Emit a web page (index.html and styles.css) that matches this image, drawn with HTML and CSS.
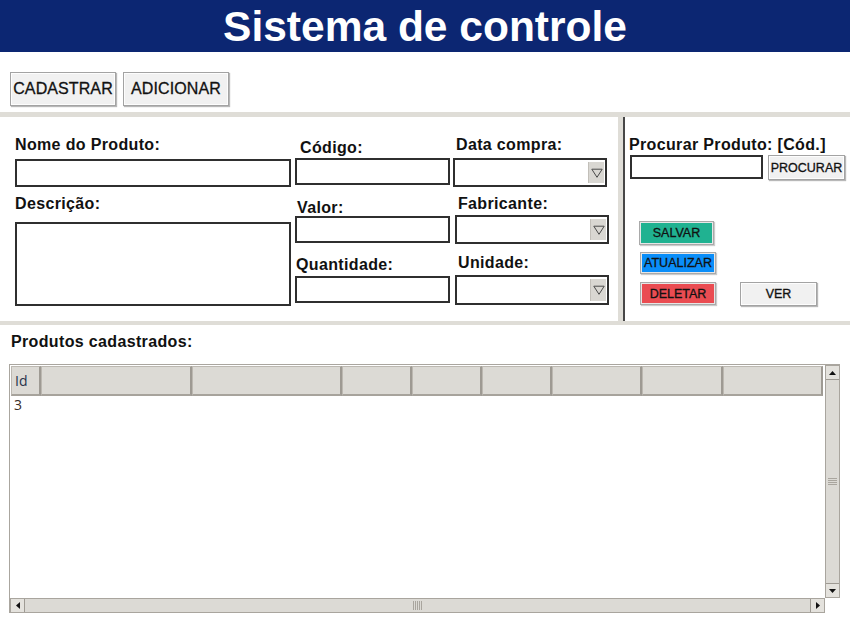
FILE: index.html
```html
<!DOCTYPE html>
<html lang="pt">
<head>
<meta charset="utf-8">
<title>Sistema de controle</title>
<link rel="stylesheet" href="styles.css">
</head>
<body>
<header class="title">Sistema de controle</header>

<nav class="toolbar">
  <button class="btn btn-top">CADASTRAR</button>
  <button class="btn btn-top">ADICIONAR</button>
</nav>

<div class="hsep"></div>

<section class="form-area">
  <div class="fields">
    <div class="col col-1">
      <label class="lbl lbl-nome">Nome do Produto:</label>
      <input class="field field-nome" type="text">
      <label class="lbl lbl-desc">Descrição:</label>
      <textarea class="field field-desc"></textarea>
    </div>
    <div class="col col-2">
      <label class="lbl lbl-codigo">Código:</label>
      <input class="field field-small field-codigo" type="text">
      <label class="lbl lbl-valor">Valor:</label>
      <input class="field field-small field-valor" type="text">
      <label class="lbl lbl-qtd">Quantidade:</label>
      <input class="field field-small field-qtd" type="text">
    </div>
    <div class="col col-3">
      <label class="lbl lbl-data">Data compra:</label>
      <div class="combo combo-data"><span class="combo-arrow"><svg width="12" height="10" viewBox="0 0 12 10"><path d="M0.8 1.2 H11.2 L6 9.3 Z" fill="none" stroke="#4a4a4a" stroke-width="1"/></svg></span></div>
      <label class="lbl lbl-fab">Fabricante:</label>
      <div class="combo combo-fab"><span class="combo-arrow"><svg width="12" height="10" viewBox="0 0 12 10"><path d="M0.8 1.2 H11.2 L6 9.3 Z" fill="none" stroke="#4a4a4a" stroke-width="1"/></svg></span></div>
      <label class="lbl lbl-uni">Unidade:</label>
      <div class="combo combo-uni"><span class="combo-arrow"><svg width="12" height="10" viewBox="0 0 12 10"><path d="M0.8 1.2 H11.2 L6 9.3 Z" fill="none" stroke="#4a4a4a" stroke-width="1"/></svg></span></div>
    </div>
  </div>
  <div class="vsep"></div>
  <div class="side">
    <label class="lbl lbl-busca">Procurar Produto: [Cód.]</label>
    <div class="search-row">
      <input class="field field-busca" type="text">
      <button class="btn btn-small btn-procurar">PROCURAR</button>
    </div>
    <div class="actions">
      <button class="btn btn-small btn-salvar">SALVAR</button>
      <button class="btn btn-small btn-atualizar">ATUALIZAR</button>
      <div class="action-row">
        <button class="btn btn-small btn-deletar">DELETAR</button>
        <button class="btn btn-small btn-ver">VER</button>
      </div>
    </div>
  </div>
</section>

<div class="hsep hsep-thin"></div>

<section class="products">
  <div class="products-label">Produtos cadastrados:</div>
  <div class="table">
    <div class="view">
      <div class="thead">
        <div class="th th-id">Id</div>
        <div class="th w151"></div>
        <div class="th w150"></div>
        <div class="th w70"></div>
        <div class="th w70"></div>
        <div class="th w70"></div>
        <div class="th w90"></div>
        <div class="th w81"></div>
        <div class="th w100"></div>
      </div>
      <div class="tr"><div class="td">3</div></div>
    </div>
    <div class="vscroll">
      <span class="sb-btn"><svg width="7" height="4" viewBox="0 0 7 4"><path d="M0 4 L3.5 0 L7 4 Z" fill="#111"/></svg></span>
      <span class="sb-thumb sb-thumb-v"><span class="grip-v"></span></span>
      <span class="sb-btn"><svg width="7" height="4" viewBox="0 0 7 4"><path d="M0 0 L7 0 L3.5 4 Z" fill="#111"/></svg></span>
    </div>
    <div class="hscroll">
      <span class="sb-btn"><svg width="4" height="7" viewBox="0 0 4 7"><path d="M4 0 L4 7 L0 3.5 Z" fill="#111"/></svg></span>
      <span class="sb-thumb sb-thumb-h"><span class="grip-h"></span></span>
      <span class="sb-btn"><svg width="4" height="7" viewBox="0 0 4 7"><path d="M0 0 L4 3.5 L0 7 Z" fill="#111"/></svg></span>
    </div>
    <div class="corner"></div>
  </div>
</section>
</body>
</html>
```

FILE: styles.css
```css
* { box-sizing: border-box; }

html, body {
  margin: 0;
  padding: 0;
}

body {
  width: 850px;
  height: 620px;
  overflow: hidden;
  background: #ffffff;
  font-family: "Liberation Sans", Arial, sans-serif;
  color: #111;
}

.title {
  height: 52px;
  background: #0c2672;
  color: #ffffff;
  font-weight: bold;
  font-size: 42.5px;
  line-height: 54px;
  text-align: center;
  overflow: hidden;
}

.toolbar {
  display: flex;
  gap: 7px;
  height: 60px;
  padding: 20px 0 0 10px;
  align-items: flex-start;
}

.btn {
  font-family: "Liberation Sans", Arial, sans-serif;
  color: #111;
  background: #f1f1f1;
  border: 1px solid #a3a3a3;
  box-shadow: inset 0 0 0 1px #fdfdfd, 1px 1px 1px rgba(0, 0, 0, 0.28);
  padding: 0;
  margin: 0;
  white-space: nowrap;
  -webkit-text-stroke: 0.3px currentColor;
}

.btn-top {
  width: 106px;
  height: 34px;
  font-size: 16px;
  letter-spacing: 0.1px;
}

.btn-small {
  font-size: 12.5px;
}

.hsep {
  height: 5px;
  background: #dfddd7;
}

.hsep-thin {
  height: 4px;
}

.form-area {
  display: flex;
  height: 204px;
}

.fields {
  width: 618px;
  display: flex;
  align-items: flex-start;
}

.col {
  display: flex;
  flex-direction: column;
  align-items: flex-start;
}

.col-1 { margin-left: 15px; width: 276px; padding-top: 20px; }
.col-2 { margin-left: 4px; width: 155px; padding-top: 23px; }
.col-3 { margin-left: 3px; width: 156px; padding-top: 20px; }

.lbl {
  display: block;
  font-weight: bold;
  font-size: 16px;
  line-height: 16px;
  height: 16px;
  letter-spacing: 0.35px;
  white-space: nowrap;
  color: #111;
}

.field {
  display: block;
  margin: 0;
  border: 2px solid #2f2f2f;
  background: #fff;
  padding: 0;
  font-size: 14px;
  outline: none;
}

.field-nome { width: 276px; height: 28px; margin-top: 6px; }
.lbl-desc { margin-top: 9px; }
.field-desc { width: 276px; height: 84px; margin-top: 10px; resize: none; }

.lbl-codigo { padding-left: 5px; }
.lbl-valor { padding-left: 2px; margin-top: 15px; }
.lbl-qtd { padding-left: 1px; margin-top: 14px; }
.field-small { width: 155px; height: 27px; }
.field-codigo { margin-top: 2px; }
.field-valor { margin-top: 0; }
.field-qtd { margin-top: 3px; }

.lbl-data { padding-left: 3px; }
.lbl-fab { padding-left: 5px; margin-top: 9px; }
.lbl-uni { padding-left: 5px; margin-top: 11px; }

.combo {
  width: 154px;
  border: 2px solid #2f2f2f;
  background: #fff;
  display: flex;
  justify-content: flex-end;
  padding: 2px 1px;
}
.combo-data { height: 29px; margin-top: 5px; }
.combo-fab { height: 29px; margin-top: 3px; margin-left: 2px; }
.combo-uni { height: 30px; margin-top: 4px; margin-left: 2px; }

.combo-arrow {
  width: 16px;
  height: 100%;
  background: #d9d7d2;
  border-left: 1px solid #c2bfb9;
  display: flex;
  align-items: center;
  justify-content: center;
}

.vsep {
  width: 7px;
  background: #dfddd7;
  border-right: 2px solid #474747;
}

.side {
  flex: 1;
  padding: 20px 0 0 4px;
}

.search-row {
  display: flex;
  align-items: flex-start;
  margin-top: 2px;
}

.field-busca {
  width: 133px;
  height: 24px;
  margin-left: 1px;
}

.btn-procurar {
  width: 77px;
  height: 25px;
  margin-left: 5px;
}

.actions {
  display: flex;
  flex-direction: column;
  align-items: flex-start;
  margin-top: 41px;
}

.btn-salvar {
  width: 75px;
  height: 24px;
  margin-left: 10px;
  background: #20b291;
  border-color: #a9a9a9;
  box-shadow: inset 0 0 0 1px #e6e6e6, 1px 1px 1px rgba(0, 0, 0, 0.2);
}

.btn-atualizar {
  width: 76px;
  height: 22px;
  margin: 7px 0 0 11px;
  background: #0a8ef9;
  border-color: #a9a9a9;
  box-shadow: inset 0 0 0 1px #e6e6e6, 1px 1px 1px rgba(0, 0, 0, 0.2);
}

.action-row {
  display: flex;
  align-items: flex-start;
  margin: 8px 0 0 11px;
}

.btn-deletar {
  width: 76px;
  height: 23px;
  background: #ea4c52;
  border-color: #a9a9a9;
  box-shadow: inset 0 0 0 1px #e6e6e6, 1px 1px 1px rgba(0, 0, 0, 0.2);
}

.btn-ver {
  width: 77px;
  height: 24px;
  margin-left: 24px;
}

.products {
  padding: 9px 0 0 9px;
}

.products-label {
  font-weight: bold;
  font-size: 16px;
  line-height: 16px;
  letter-spacing: 0.35px;
  padding-left: 2px;
  color: #111;
}

.table {
  margin-top: 14px;
  width: 831px;
  height: 249px;
  border-top: 1px solid #aaa69f;
  border-left: 1px solid #aaa69f;
  display: grid;
  grid-template-columns: 1fr 15px;
  grid-template-rows: 1fr 15px;
}

.view {
  padding: 1px 0 0 1px;
  overflow: hidden;
  background: #fff;
  font-family: "Open Sans", "DejaVu Sans", sans-serif;
  font-size: 14px;
  color: #2b2b2b;
}

.thead {
  display: flex;
  height: 30px;
}

.th {
  height: 30px;
  flex: none;
  background: #dcdad5;
  border: 1px solid #bcb8b1;
  border-right: 2px solid #9e9a93;
  border-bottom: 2px solid #a7a39c;
  line-height: 27px;
  padding-left: 3px;
  color: #28324a;
}

.th-id { width: 30px; }
.w151 { width: 151px; }
.w150 { width: 150px; }
.w70 { width: 70px; }
.w90 { width: 90px; }
.w81 { width: 81px; }
.w100 { width: 100px; }

.tr {
  height: 18px;
}

.td {
  line-height: 18px;
  padding-left: 3px;
  color: #3a2e26;
}

.vscroll, .hscroll {
  background: #dcdad5;
  display: flex;
  border: 1px solid #a9a59e;
}

.vscroll { flex-direction: column; }
.hscroll { flex-direction: row; }

.sb-btn {
  flex: none;
  width: 13px;
  height: 13px;
  display: flex;
  align-items: center;
  justify-content: center;
  background: #e4e2dd;
}

.sb-thumb {
  flex: 1;
  display: flex;
  align-items: center;
  justify-content: center;
  background: #dcdad5;
}

.sb-thumb-v {
  border-top: 1px solid #9e9a93;
  border-bottom: 1px solid #9e9a93;
}

.sb-thumb-h {
  border-left: 1px solid #9e9a93;
  border-right: 1px solid #9e9a93;
}

.grip-v {
  width: 9px;
  height: 7px;
  background: repeating-linear-gradient(to bottom, #a9a59e 0 1px, transparent 1px 2px);
}

.grip-h {
  width: 9px;
  height: 9px;
  background: repeating-linear-gradient(to right, #a9a59e 0 1px, transparent 1px 2px);
}

.corner {
  background: #fff;
}
```
